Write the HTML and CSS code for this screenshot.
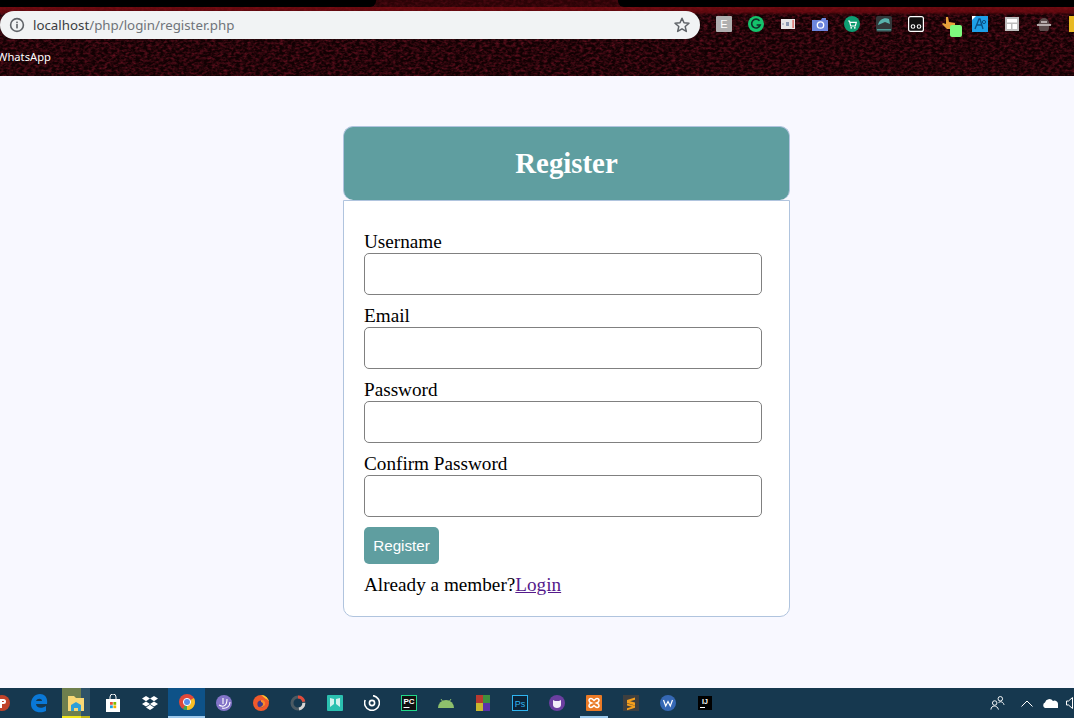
FILE: index.html
```html
<!DOCTYPE html>
<html lang="en">
<head>
    <meta charset="UTF-8">
    <title>Register</title>
    <link rel="stylesheet" href="styles.css">
</head>
<body>
    <div class="browser">
        <div class="tabs">
            <div class="tab tab-left"></div>
            <div class="tab tab-right"></div>
        </div>
        <div class="toolbar">
            <div class="omnibox">
                <svg class="info" width="16" height="16" viewBox="0 0 16 16"><circle cx="8" cy="8" r="6.4" fill="none" stroke="#5f6368" stroke-width="1.6"/><rect x="7.2" y="7" width="1.6" height="4.4" fill="#5f6368"/><rect x="7.2" y="4.6" width="1.6" height="1.6" fill="#5f6368"/></svg>
                <span class="url"><span class="host">localhost</span>/php/login/register.php</span>
                <svg class="star" width="18" height="18" viewBox="0 0 18 18"><path d="M9 2.2l2 4.6 5 .45-3.8 3.3 1.15 4.9L9 12.85 4.65 15.45 5.8 10.55 2 7.25l5-.45z" fill="none" stroke="#5f6368" stroke-width="1.5" stroke-linejoin="round"/></svg>
            </div>
            <div class="extensions">
                <span class="ext"><svg width="16" height="16" viewBox="0 0 16 16"><rect width="16" height="16" rx="1" fill="#b0b0b0"/><text x="8" y="12" font-size="11" font-family="Liberation Sans" fill="#fff" text-anchor="middle">E</text></svg></span>
                <span class="ext"><svg width="16" height="16" viewBox="0 0 16 16"><circle cx="8" cy="8" r="8" fill="#15c26b"/><path d="M11.5 4.8A4.4 4.4 0 1 0 12.2 9H8.6" fill="none" stroke="#10302a" stroke-width="1.6"/></svg></span>
                <span class="ext"><svg width="14" height="12" viewBox="0 0 14 12"><rect width="14" height="10" y="1" fill="#e8e6e6"/><rect x="5" y="4" width="3" height="4" fill="#8a97b0"/><rect x="1" y="5" width="2" height="2" fill="#b9c0cc"/><rect x="11.5" y="2" width="1.2" height="8" fill="#d9534f"/></svg></span>
                <span class="ext"><svg width="16" height="14" viewBox="0 0 16 14"><path d="M0 3h9l1-2h4v2h2v11H0z" fill="#6d86dd"/><circle cx="8.5" cy="8" r="3.2" fill="none" stroke="#fff" stroke-width="1.3"/></svg></span>
                <span class="ext"><svg width="16" height="16" viewBox="0 0 16 16"><circle cx="8" cy="8" r="8" fill="#0f9d72"/><path d="M4 5h1.5l1.2 5h4.6l1-3.6H6" fill="none" stroke="#fff" stroke-width="1.2"/><circle cx="7.2" cy="11.8" r=".9" fill="#fff"/><circle cx="10.8" cy="11.8" r=".9" fill="#fff"/></svg></span>
                <span class="ext"><svg width="16" height="16" viewBox="0 0 16 16"><rect width="16" height="16" rx="2" fill="#33383a"/><path d="M2 9C3 4 8 1 13 3l1 5-5-2z" fill="#58b3ad"/><rect x="1" y="13" width="14" height="1.5" fill="#4b9a95"/></svg></span>
                <span class="ext"><svg width="16" height="16" viewBox="0 0 16 16"><rect x=".6" y=".6" width="14.8" height="14.8" rx="2" fill="#111" stroke="#fff" stroke-width="1.2"/><circle cx="5" cy="10.5" r="1.8" fill="none" stroke="#fff" stroke-width="1.1"/><circle cx="11" cy="10.5" r="1.8" fill="none" stroke="#fff" stroke-width="1.1"/></svg></span>
                <span class="ext ext-badge"><svg width="14" height="14" viewBox="0 0 14 14"><path d="M5 0h2l1 5 6 1v2l-4 4H6L1 7l1-1 3 1z" fill="#e6a23c"/></svg><span class="badge"></span></span>
                <span class="ext"><svg width="16" height="16" viewBox="0 0 16 16"><rect width="16" height="16" fill="#1e9fe8"/><path d="M0 0h4L0 4z" fill="#fff"/><path d="M3 13L7 3h1l3 10M5 9h5" fill="none" stroke="#0b4f86" stroke-width="1.3"/><circle cx="12" cy="6" r="1.6" fill="none" stroke="#0b4f86"/></svg></span>
                <span class="ext"><svg width="14" height="14" viewBox="0 0 14 14"><rect width="14" height="14" fill="#bdbdbd"/><rect x="2" y="2" width="10" height="3.5" fill="#fff"/><rect x="2" y="7" width="4" height="5" fill="#fff"/><rect x="7.5" y="7" width="4.5" height="5" fill="#fff"/></svg></span>
                <span class="ext"><svg width="16" height="14" viewBox="0 0 16 14"><path d="M3 6a5 5 0 0 1 10 0l3 2-3 1v2a5 5 0 0 1-10 0V9L0 8z" fill="#5d4c4c"/><path d="M1 8h14M5 5h6" stroke="#d5cccc" stroke-width="1.4"/></svg></span>
                <span class="ext"><svg width="14" height="16" viewBox="0 0 14 16"><rect width="14" height="16" fill="#e8b923"/></svg></span>
            </div>
        </div>
        <div class="bookmarks"><span class="bookmark">WhatsApp</span></div>
    </div>

    <main class="page">
        <div class="header">
            <h2>Register</h2>
        </div>
        <form class="register-form" onsubmit="return false">
            <div class="input-group">
                <label for="username">Username</label>
                <input type="text" id="username">
            </div>
            <div class="input-group">
                <label for="email">Email</label>
                <input type="email" id="email">
            </div>
            <div class="input-group">
                <label for="password">Password</label>
                <input type="password" id="password">
            </div>
            <div class="input-group">
                <label for="confirm">Confirm Password</label>
                <input type="password" id="confirm">
            </div>
            <button type="submit" class="btn">Register</button>
            <p class="member">Already a member?<a href="#">Login</a></p>
        </form>
    </main>

    <footer class="taskbar">
        <div class="task-icons">
            <span class="task"><svg width="24" height="24" viewBox="0 0 24 24"><circle cx="12" cy="12" r="8" fill="#c0432a"/><path d="M10 8h3.5a2.5 2.5 0 0 1 0 5H12v4h-2zM12 10v1h1.500a.5.5 0 0 0 0-1z" fill="#fff"/></svg></span>
            <span class="task"><svg width="20" height="20" viewBox="0 0 20 20"><path d="M2 11C2 5 6 1 11 1c5 0 8 4 7 10H7c0 4 6 5 10 2v5c-6 3-15 1-15-7zM7 8h6c0-3-5-3-6 0z" fill="#0a78d7"/></svg></span>
            <span class="task task-folder"><svg width="16" height="15" viewBox="0 0 16 15"><path d="M0 0h6l2 2h8v13H0z" fill="#f8d775"/><path d="M3 15V9l5-3 5 3v6h-3v-3H6v3z" fill="#2f9fd8"/></svg></span>
            <span class="task"><svg width="16" height="18" viewBox="0 0 16 18"><path d="M1 5h14v13H1z" fill="#fff"/><path d="M5 5V3a3 3 0 0 1 6 0v2" fill="none" stroke="#fff"/><rect x="5" y="8" width="2.8" height="2.8" fill="#e8503a"/><rect x="8.4" y="8" width="2.8" height="2.8" fill="#7fba00"/><rect x="5" y="11.4" width="2.8" height="2.8" fill="#1ba1e2"/><rect x="8.4" y="11.4" width="2.8" height="2.8" fill="#f2b100"/></svg></span>
            <span class="task"><svg width="16" height="16" viewBox="0 0 16 16"><path d="M4 1l4 2.6L4 6.2 0 3.6zM12 1l4 2.6-4 2.600-4-2.600zM4 6.400L8 9l-4 2.600L0 9zM12 6.400L16 9l-4 2.600L8 9zM4 12.400l4-2.600 4 2.600L8 15z" fill="#fff"/></svg></span>
            <span class="task task-active"><svg width="16" height="16" viewBox="0 0 16 16"><circle cx="8" cy="8" r="8" fill="#e0483a"/><path d="M8 8L14.900 12A8 8 0 0 1 4 15z" fill="#3aa757"/><path d="M8 8l6.900-4A8 8 0 0 1 8 16z" fill="#f6c026"/><circle cx="8" cy="8" r="3.600" fill="#5a8de8" stroke="#fff"/></svg></span>
            <span class="task"><svg width="16" height="16" viewBox="0 0 16 16"><circle cx="8" cy="8" r="8" fill="#8374c8"/><path d="M3 10c5 3 8 0 8-6M6 13c5 1 8-2 8-6M7 3v6" fill="none" stroke="#fff" stroke-width="1.100"/></svg></span>
            <span class="task"><svg width="16" height="16" viewBox="0 0 16 16"><circle cx="8" cy="8" r="8" fill="#f0592b"/><path d="M8 0a8 8 0 0 1 8 8c0-2-2-4-3-4z" fill="#fdc52e"/><circle cx="8" cy="9" r="3.600" fill="#3d3a8a"/><path d="M8 5c3 0 5 2 4 5-1 2-4 3-6 2 3 0 4-2 4-3s-1-2-2-2z" fill="#f98a2b"/></svg></span>
            <span class="task"><svg width="16" height="16" viewBox="0 0 16 16"><circle cx="8" cy="8" r="6" fill="none" stroke="#4c5a63" stroke-width="3"/><path d="M8 2a6 6 0 0 1 5.800 4.500" fill="none" stroke="#e24a3b" stroke-width="3"/><path d="M13.800 8A6 6 0 0 1 9 14" fill="none" stroke="#d5d5d5" stroke-width="3"/></svg></span>
            <span class="task"><svg width="16" height="16" viewBox="0 0 16 16"><rect width="16" height="16" rx="1" fill="#2bc0b0"/><path d="M3 3v9l4-3V4zM13 3v9L9 9V4z" fill="#d3f2ee"/></svg></span>
            <span class="task"><svg width="16" height="16" viewBox="0 0 16 16"><path d="M9 .600A7.400 7.400 0 1 1 1.200 5" fill="none" stroke="#fff" stroke-width="1.600"/><circle cx="8" cy="8" r="2.600" fill="none" stroke="#fff" stroke-width="1.600"/></svg></span>
            <span class="task"><svg width="16" height="16" viewBox="0 0 16 16"><rect x=".5" y=".5" width="15" height="15" fill="#111" stroke="#21d789"/><text x="8" y="9" font-size="8" font-weight="bold" font-family="Liberation Sans" fill="#fff" text-anchor="middle">PC</text><rect x="2.500" y="12" width="6" height="1" fill="#fff"/></svg></span>
            <span class="task"><svg width="16" height="10" viewBox="0 0 16 10"><path d="M0 10a8 8 0 0 1 16 0z" fill="#8ec06c"/><path d="M3 1l2 3M13 1l-2 3" stroke="#8ec06c"/></svg></span>
            <span class="task"><svg width="16" height="16" viewBox="0 0 16 16"><rect x="1" y="0" width="7" height="8" fill="#b83a30"/><rect x="8" y="0" width="7" height="8" fill="#3f8f3e"/><rect x="1" y="8" width="7" height="8" fill="#c9b82f"/><rect x="8" y="8" width="7" height="8" fill="#5a32a8"/></svg></span>
            <span class="task"><svg width="16" height="16" viewBox="0 0 16 16"><rect x=".5" y=".5" width="15" height="15" fill="#0b2338" stroke="#2fb4f0"/><text x="8" y="11.500" font-size="9" font-family="Liberation Sans" fill="#2fb4f0" text-anchor="middle">Ps</text></svg></span>
            <span class="task"><svg width="16" height="16" viewBox="0 0 16 16"><circle cx="8" cy="8" r="8" fill="#6b3fa0"/><path d="M4 5l2 1h4l2-1v5c0 2-2 3-4 3s-4-1-4-3z" fill="#f3eef8"/></svg></span>
            <span class="task task-open"><svg width="16" height="16" viewBox="0 0 16 16"><rect width="16" height="16" rx="1" fill="#ea7a26"/><path d="M5 3.500c1.500 0 2 1 3 2 1-1 1.500-2 3-2s2 1 2 2-1 2-2.500 2.500C12 8.500 13 9.500 13 10.500s-.5 2-2 2-2-1-3-2c-1 1-1.500 2-3 2s-2-1-2-2 1-2 2.500-2.500C4 7.500 3 6.500 3 5.500s.5-2 2-2z" fill="none" stroke="#fff" stroke-width="1.500"/></svg></span>
            <span class="task"><svg width="16" height="16" viewBox="0 0 16 16"><rect width="16" height="16" fill="#3f3f3f"/><path d="M12 2.500L4 5v3l8 2.500v-3L7 6.300l5-1.500zM4 8.500v2l5 1.200-5 1.500v2l8-2.500v-2z" fill="#f59f1d"/></svg></span>
            <span class="task"><svg width="16" height="16" viewBox="0 0 16 16"><circle cx="8" cy="8" r="8" fill="#3568b5"/><path d="M3.500 5l2.200 6L8 6.500l2.300 4.500 2.200-6" fill="none" stroke="#fff" stroke-width="1.200"/></svg></span>
            <span class="task"><svg width="14" height="14" viewBox="0 0 14 14"><rect width="14" height="14" fill="#000"/><text x="7" y="8" font-size="7" font-weight="bold" font-family="Liberation Sans" fill="#fff" text-anchor="middle">IJ</text><rect x="2" y="11" width="5" height="1" fill="#fff"/></svg></span>
        </div>
        <div class="tray">
            <svg width="15" height="16" viewBox="0 0 16 16"><circle cx="5" cy="8" r="2.400" fill="none" stroke="#fff"/><path d="M1 15c0-5 7-5 8 0" fill="none" stroke="#fff"/><circle cx="11" cy="3.500" r="2.400" fill="none" stroke="#fff"/><path d="M9 8c1-2 5-2 6 2" fill="none" stroke="#fff"/></svg>
            <svg class="tray-up" width="12" height="7" viewBox="0 0 12 7"><path d="M.5 6.500L6 1l5.500 5.500" fill="none" stroke="#fff"/></svg>
            <svg class="tray-cloud" width="16" height="10" viewBox="0 0 16 10"><path d="M3 10a3 3 0 0 1 0-5.500A4.500 4.500 0 0 1 11 3a3.500 3.500 0 0 1 5 3.500V10z" fill="#fff"/></svg>
            <svg class="tray-sound" width="8" height="12" viewBox="0 0 8 12"><path d="M.5 4h2l4-3.500v11l-4-3.500h-2z" fill="none" stroke="#fff"/></svg>
        </div>
    </footer>
</body>
</html>
```
FILE: styles.css
```css
* {
    box-sizing: border-box;
}

body {
    margin: 0;
    height: 718px;
    overflow: hidden;
    display: flex;
    flex-direction: column;
    font-family: "Liberation Serif", serif;
    font-size: 19.2px;
    background-color: #F8F8FF;
}

/* browser chrome */
.browser {
    height: 76px;
    flex: none;
    overflow: hidden;
    background-color: #120103;
    background-image:
        linear-gradient(to bottom, rgba(60,4,8,.6) 0, rgba(60,4,8,.6) 7px, rgba(130,12,18,.8) 7px, rgba(115,10,16,.75) 12px, rgba(0,0,0,0) 15px),
        url("data:image/svg+xml,%3Csvg xmlns='http://www.w3.org/2000/svg' width='1074' height='76'%3E%3Cfilter id='n'%3E%3CfeTurbulence type='fractalNoise' baseFrequency='.25 .4' numOctaves='3'/%3E%3CfeColorMatrix values='0 0 0 0 .3 0 0 0 0 .01 0 0 0 0 .03 0 0 0 1.2 -.45'/%3E%3C/filter%3E%3Crect width='1074' height='76' filter='url(%23n)'/%3E%3C/svg%3E");
}

.tabs {
    height: 7px;
    display: flex;
    justify-content: space-between;
}

.tab {
    height: 7px;
    background-color: #000;
}

.tab-left {
    width: 376px;
    border-radius: 0 0 6px 0;
}

.tab-right {
    width: 456px;
    border-radius: 0 0 0 6px;
}

.toolbar {
    height: 36px;
    padding-top: 4px;
    display: flex;
}

.omnibox {
    width: 700px;
    height: 28px;
    flex: none;
    display: flex;
    align-items: center;
    padding: 0 9px;
    background-color: #F1F3F4;
    border-radius: 14px;
}

.url {
    margin-left: 8px;
    flex: 1;
    font-family: "Noto Sans", sans-serif;
    font-size: 13.3px;
    color: #6f7479;
}

.host {
    color: #3a3d40;
}

.extensions {
    display: flex;
    margin-left: 8px;
    margin-top: -2px;
}

.ext {
    width: 32px;
    height: 30px;
    flex: none;
    display: flex;
    align-items: center;
    justify-content: center;
    position: relative;
}

.badge {
    position: absolute;
    left: 18px;
    top: 16px;
    width: 12px;
    height: 12px;
    border-radius: 2px;
    background-color: #7dfc7d;
}

.bookmarks {
    padding-top: 1px;
    margin-left: -3px;
}

.bookmark {
    font-family: "Noto Sans", sans-serif;
    font-size: 11.2px;
    color: #fff;
}

/* form */
.page {
    flex: 1;
    padding-top: 50px;
    padding-left: 343px;
}

.header {
    width: 447px;
    padding: 20px;
    color: #fff;
    text-align: center;
    background-color: #5F9EA0;
    border: 1px solid #B0C4DE;
    border-bottom: none;
    border-radius: 10px;
}

.header h2 {
    margin: 0;
    font-size: 28.8px;
    line-height: 33px;
}

.register-form {
    width: 447px;
    padding: 20px;
    background-color: #fff;
    border: 1px solid #B0C4DE;
    border-radius: 0 0 10px 10px;
}

.input-group {
    margin: 10px 0;
}

.input-group label {
    display: block;
    line-height: 22px;
}

.input-group input {
    display: block;
    width: 398px;
    height: 42px;
    padding: 5px 10px;
    font-size: 16px;
    background-color: #fff;
    border: 1px solid gray;
    border-radius: 5px;
}

.btn {
    display: block;
    width: 75px;
    height: 37px;
    padding: 0;
    font-family: "Liberation Sans", sans-serif;
    font-size: 15.2px;
    color: #fff;
    background-color: #5F9EA0;
    border: none;
    border-radius: 5px;
}

.member {
    margin: 10px 0 0;
    line-height: 22px;
}

.member a {
    color: #551A8B;
}

/* windows taskbar */
.taskbar {
    height: 30px;
    flex: none;
    display: flex;
    justify-content: space-between;
    overflow: hidden;
    background-color: #16384F;
}

.task-icons {
    display: flex;
    margin-left: -17px;
}

.task {
    width: 37px;
    height: 30px;
    flex: none;
    display: flex;
    align-items: center;
    justify-content: center;
}

.task-active {
    background-color: #0E5288;
    border-bottom: 2px solid #9CC8EC;
}

.task-folder {
    background: linear-gradient(to right, transparent 5px, #6E7F4E 5px, #6E7F4E 24px, #2E5268 24px, #2E5268 33px, transparent 33px);
}

.task-folder::after {
    content: "";
    position: absolute;
    bottom: 0;
    width: 28px;
    height: 2px;
    background: linear-gradient(to right, #F2E61C 19px, #BDB317 19px);
}

.task-open::after {
    content: "";
    position: absolute;
    bottom: 0;
    width: 28px;
    height: 2px;
    background-color: #9CC8EC;
}

.tray {
    display: flex;
    align-items: center;
    gap: 11px;
}

.tray-up {
    margin-left: 5px;
}

.tray-cloud {
    margin-left: -2px;
    margin-right: -3px;
}
```
